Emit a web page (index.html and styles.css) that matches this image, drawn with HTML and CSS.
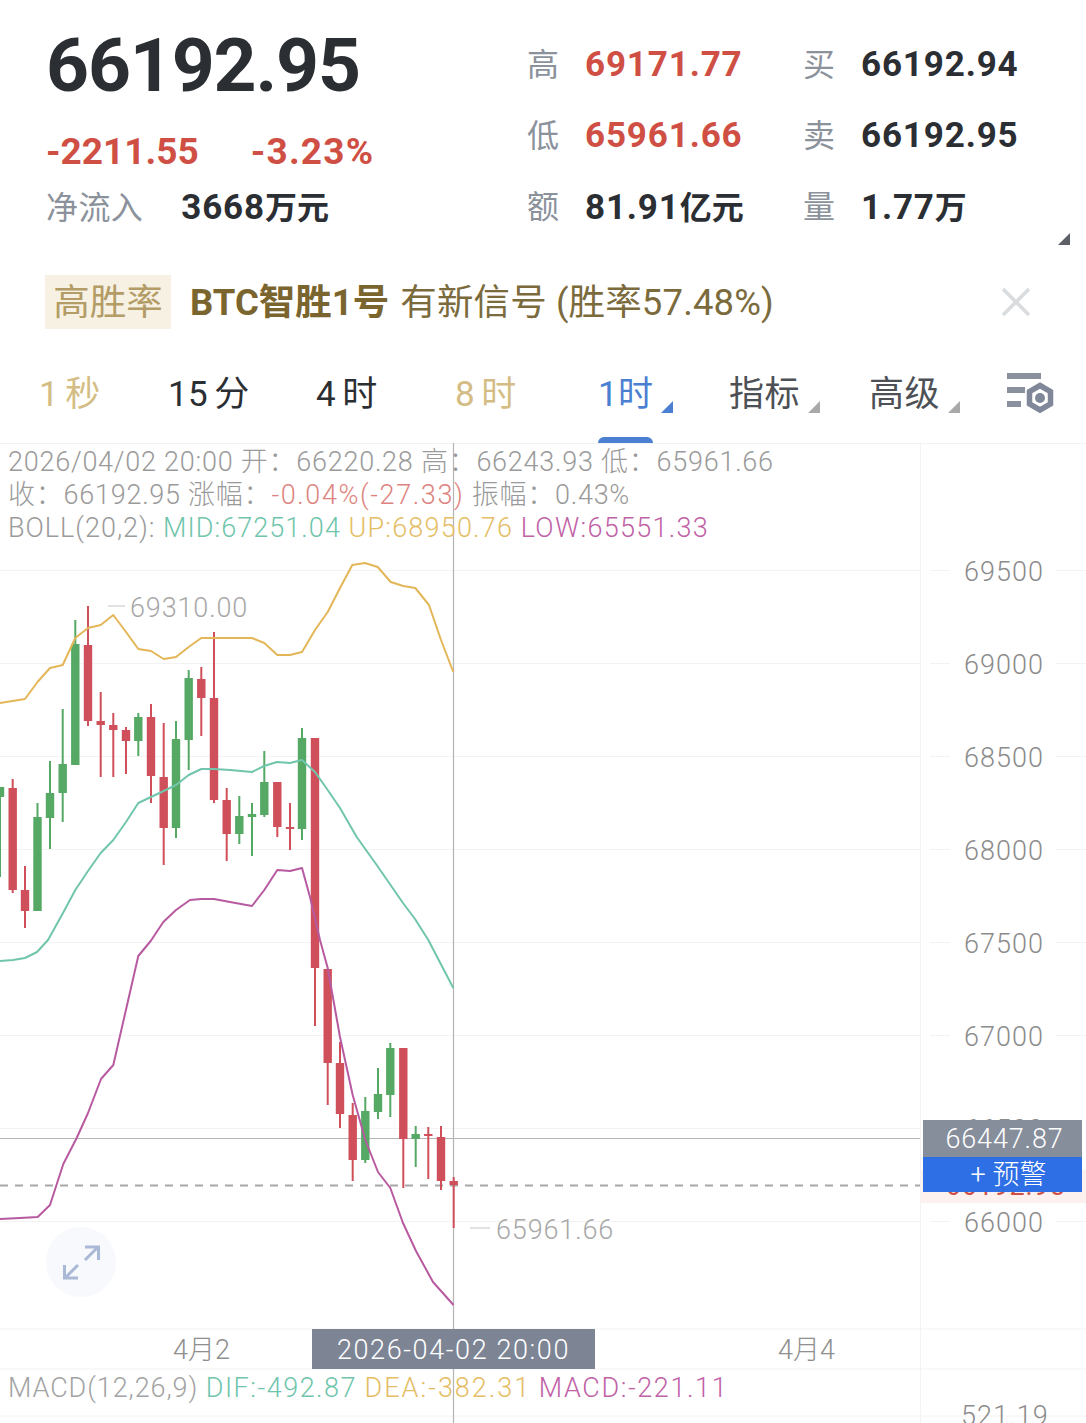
FILE: index.html
```html
<!DOCTYPE html>
<html lang="zh-CN">
<head>
<meta charset="utf-8">
<title>BTC</title>
<link rel="stylesheet" href="styles.css">
</head>
<body>
<main class="page">
  <section class="quote">
    <div class="quote-left">
      <div class="price">66192.95</div>
      <div class="change"><span class="neg">-2211.55</span><span class="neg pct">-3.23%</span></div>
      <div class="inflow"><span class="label">净流入</span><span class="val">3668<span class="unit">万元</span></span></div>
    </div>
    <div class="quote-grid">
      <span class="label">高</span><span class="val neg">69171.77</span><span class="label">买</span><span class="val">66192.94</span>
      <span class="label">低</span><span class="val neg">65961.66</span><span class="label">卖</span><span class="val">66192.95</span>
      <span class="label">额</span><span class="val val-unit">81.91<span class="unit">亿元</span></span><span class="label">量</span><span class="val val-unit">1.77<span class="unit">万</span></span>
    </div>
    <i class="corner corner-quote"></i>
  </section>

  <section class="signal">
    <span class="badge">高胜率</span>
    <strong class="sig-name">BTC智胜1号</strong>
    <span class="sig-text">有新信号 (胜率57.48%)</span>
    <svg class="close" viewBox="0 0 30 30" aria-hidden="true"><path d="M2 2 L28 28 M28 2 L2 28"/></svg>
  </section>

  <nav class="tabs">
    <span class="tab gold">1 秒</span>
    <span class="tab">15 分</span>
    <span class="tab">4 时</span>
    <span class="tab gold">8 时</span>
    <span class="tab active">1时<i class="corner corner-blue"></i></span>
    <span class="tab menu">指标<i class="corner corner-grey"></i></span>
    <span class="tab menu">高级<i class="corner corner-grey"></i></span>
    <svg class="gear" viewBox="0 0 50 46" aria-hidden="true">
      <path class="gear-bars" d="M1 0h34v6H1z M1 14h18v6H1z M1 28h14v6H1z"/>
      <path class="gear-hex" d="M34 12.5 L44.5 18.5 V31 L34 37 L23.500 31 V18.500 Z"/>
      <circle class="gear-dot" cx="34" cy="25" r="5"/>
    </svg>
  </nav>

  <section class="chart">
    <svg class="plot" viewBox="0 443 1086 980" aria-hidden="true">
      <path class="grid" d="M0 570.500H920 M0 663.500H920 M0 756.500H920 M0 849.500H920 M0 942.500H920 M0 1035.500H920 M0 1128.500H920 M0 1221.500H920 M0 1329H1086 M0 1369H1086 M0 1416H1086 M920.500 443V1423 M930 570.500H950 M1056 570.500H1086 M930 663.500H950 M1056 663.500H1086 M930 756.500H950 M1056 756.500H1086 M930 849.500H950 M1056 849.500H1086 M930 942.500H950 M1056 942.500H1086 M930 1035.500H950 M1056 1035.500H1086 M930 1221.500H950 M1056 1221.500H1086"/>

      <path class="cross" d="M453.500 443V1423 M0 1138.500H920"/>
      <path class="dash" d="M0 1185.500H920"/>
      <path class="leader" d="M108 606H125 M470 1228H490"/>

      <path class="wick up" d="M0 787V877 M37.500 803V911 M50 761V849 M62.700 709V822 M75.300 620V765 M138.300 713V756 M176 721V838 M188.700 670V770 M239.300 796V844 M252 803V856 M264.300 751V817 M302 728V840 M365.300 1097V1163 M378 1068V1119 M390.300 1043V1117 M415.700 1126V1167"/>
      <path class="body up" d="M0 787V797 M37.500 817V911 M50 793V818 M62.700 764V793 M75.300 644V765 M138.300 717V741 M176 739V828 M188.700 678V740 M239.300 816V834 M252 814V817 M264.300 782V815 M302 738V829 M365.300 1111V1160 M378 1094V1112 M390.300 1048V1095 M415.700 1134V1139"/>
      <path class="wick down" d="M12.700 779V893 M25 866V928 M88 606V726 M100.700 692V777 M113.300 713V777 M126 727V774 M151 704V803 M163.700 723V865 M201.300 667V736 M214 632V803 M226.700 788V861 M277.300 782V837 M290 803V850 M315 738V1026 M327.700 969V1105 M340 1042V1128 M352.700 1103V1181 M403.300 1048V1188 M428.300 1127V1179 M441 1126V1190 M453.700 1177V1228"/>
      <path class="body down" d="M12.700 788V890 M25 890V911 M88 645V721 M100.700 721V725 M113.300 725V730 M126 730V741 M151 717V776 M163.700 777V828 M201.300 679V698 M214 698V800 M226.700 800V834 M277.300 782V827 M290 827V829 M315 738V968 M327.700 969V1063 M340 1063V1114 M352.700 1115V1160 M403.300 1048V1139 M428.300 1134V1136 M441 1137V1181 M453.700 1181V1185"/>

      <path class="line boll-up" d="M0 703 25 699 37.500 682 50 668 62.700 665 75.300 638 88 628 100.700 625 113.300 615 126 632 138.300 649 151 651 163.700 659 176 657 188.700 647 201.300 638 214 638 252 638 264.300 643 277.300 655 290 655 302 652 315 630 327.700 612 340 588 352.300 565 365 563 377.700 567 390.700 582 403.300 586 415.300 588 429 605 441 640 453.300 672"/>
      <path class="line boll-mid" d="M0 961 13 960 25 958 37 952 48 940 63 913 75.300 890 88 871 100.700 853 113.300 840 126 822 138.300 803 151 797 163.700 791 176 785 188.700 775 201.300 769 214 769 230 770 252 772 264 766 277 762 290 763 302 760 315 772 327.700 790 340 808 356.700 837 376.700 865 403 903 415 919 428.300 940 453.300 988"/>
      <path class="line boll-low" d="M0 1219 20 1218 37.700 1217 50 1205 63.300 1164 76.700 1138 88 1113 101 1079 113.300 1065 138.300 956 150.700 941 163.300 922 176 910 190 900 201.300 899 214 899 230 902 252 906 264.300 890 277.300 870 290 871 302 868 310 897 320 940 327.700 968 340 1037 352.700 1095 365.300 1140 378 1172 390.300 1188 403 1223 416 1251 433 1282 453.500 1305"/>

      <circle class="expand-bg" cx="81" cy="1262" r="35"/>
      <path class="expand" d="M85 1260 98 1247 M85 1247H98.500V1260 M78 1265 65 1278 M64.500 1265V1278H78"/>
    </svg>

    <div class="legend">
      <div>2026/04/02 20:00 开：66220.28 高：66243.93 低：65961.66</div>
      <div>收：66192.95 涨幅：<span class="c-red">-0.04%(-27.33)</span> 振幅：0.43%</div>
      <div class="legend-boll">BOLL(20,2): <span class="c-teal">MID:67251.04</span> <span class="c-gold">UP:68950.76</span> <span class="c-pink">LOW:65551.33</span></div>
    </div>

    <span class="mark mark-high">69310.00</span>
    <span class="mark mark-low">65961.66</span>

    <div class="y-axis">
      <span>69500</span><span>69000</span><span>68500</span><span>68000</span><span>67500</span><span>67000</span><span>66500</span><span>66000</span>
    </div>

    <div class="last-price">66192.95</div>
    <div class="tags">
      <div class="tag-price">66447.87</div>
      <div class="tag-alert">+ 预警</div>
    </div>

    <div class="x-axis">
      <span class="x-a">4月2</span>
      <span class="x-cur">2026-04-02 20:00</span>
      <span class="x-b">4月4</span>
    </div>

    <div class="macd">MACD(12,26,9) <span class="m-dif">DIF:-492.87</span> <span class="m-dea">DEA:-382.31</span> <span class="m-val">MACD:-221.11</span></div>
    <span class="macd-top">521.19</span>
  </section>
</main>
</body>
</html>
```
FILE: styles.css
```css
* { box-sizing: border-box; }
html, body { margin: 0; background: #fff; }
body { font-family: Roboto, "Noto Sans CJK SC", sans-serif; }
.page { width: 1086px; height: 1423px; overflow: hidden; position: relative; }
i { display: block; }

/* quote */
.quote { position: relative; height: 262px; display: flex; padding-left: 46px; }
.quote-left { width: 481px; }
.price { height: 130px; line-height: 130px; font-size: 75px; font-weight: 700; color: #2b2e33; letter-spacing: -1.150px; }
.change { height: 44px; line-height: 44px; font-size: 37px; font-weight: 700; display: flex; gap: 52px; }
.pct { letter-spacing: 1.2px; }
.inflow { height: 66px; line-height: 68px; display: flex; gap: 38px; }
.inflow .label { letter-spacing: .4px; }
.label { color: #8b929b; font-size: 32px; font-weight: 400; }
.val { color: #2b2e33; font-size: 35px; font-weight: 700; letter-spacing: .85px; }
.neg, .val.neg { color: #cf4f44; }
.unit { font-size: 32px; letter-spacing: 0; }
.quote-grid { display: grid; grid-template-columns: 57px 219px 57px 1fr; grid-auto-rows: 71px; align-items: center; padding-top: 29px; margin-left: 1px; }
.quote-grid .label { margin-bottom: 6px; margin-left: -1px; }
.quote-grid .val-unit { margin-bottom: 4px; }
.corner { width: 0; height: 0; border-style: solid; border-width: 0 0 12px 12px; border-color: transparent; }
.corner-quote { position: absolute; left: 1058px; top: 233px; border-bottom-color: #5d6167; }

/* signal */
.signal { height: 82px; display: flex; align-items: center; padding-left: 45px; }
.badge { width: 126px; height: 54px; line-height: 56px; text-align: center; background: #f7f1e4; color: #b39c66; font-size: 36.5px; margin-top: -3px; }
.sig-name { margin-left: 19px; color: #7b652f; font-size: 36.5px; font-weight: 700; margin-top: -7px; }
.sig-text { margin-left: 11px; color: #7b6b3c; font-size: 36.5px; margin-top: -7px; letter-spacing: .13px; }
.close { width: 30px; height: 30px; margin-left: 227px; margin-top: -3px; }
.close path { stroke: #d9dcdf; stroke-width: 3.500; fill: none; }

/* tabs */
.tabs { height: 99px; display: grid; grid-template-columns: 129px 148px 139px 143px 131px 140px 137px 50px; padding-left: 39px; align-items: start; padding-top: 28px; }
.tab { position: relative; font-size: 35px; line-height: 46px; color: #2b2e33; width: max-content; word-spacing: -3px; letter-spacing: .4px; }
.tab.gold { color: #d4bd84; }
.tab.menu { color: #4d5156; }
.tab.active { color: #4a7fd2; }
.tab.active::after { content: ""; position: absolute; left: 0; right: 0; bottom: -25px; height: 6px; background: #4a7fd2; border-radius: 6px 6px 0 0; }
.tab .corner { position: absolute; left: calc(100% + 8px); bottom: 5px; }
.corner-blue { border-bottom-color: #4a7fd2; }
.corner-grey { border-bottom-color: #a9a9a9; }
.gear { width: 50px; height: 46px; margin-top: 1px; }
.gear-bars { fill: #8a909e; }
.gear-hex { fill: none; stroke: #7f8798; stroke-width: 5.500; }
.gear-dot { fill: #7f8798; }

/* chart */
.chart { position: relative; height: 980px; border-top: 1px solid #f3f3f3; }
.plot { position: absolute; left: 0; top: -1px; width: 1086px; height: 980px; }
.grid { stroke: #f3f3f3; stroke-width: 1; fill: none; }
.wick { stroke-width: 2; fill: none; }
.body { stroke-width: 8.400; fill: none; }
.up { stroke: #56a964; }
.down { stroke: #cf505a; }
.line { fill: none; stroke-width: 2; stroke-linejoin: round; }
.boll-up { stroke: #e3b658; }
.boll-mid { stroke: #70c5ac; }
.boll-low { stroke: #b75aa0; }
.cross { stroke: #b4b4b4; stroke-width: 1.200; fill: none; }
.dash { stroke: #a8a8a8; stroke-width: 1.800; stroke-dasharray: 8 7; fill: none; }
.leader { stroke: #c4c4c4; stroke-width: 1; fill: none; }
.expand-bg { fill: #f8f9fd; }
.expand { stroke: #a9b9d6; stroke-width: 3; fill: none; }

.legend { position: relative; padding: 2px 0 0 8px; font-size: 27px; line-height: 33px; color: #9a9a9a; white-space: nowrap; font-weight: 300; letter-spacing: .75px; }
.legend-boll { letter-spacing: 1px; }
.c-red { color: #dd8480; letter-spacing: 1.6px; }
.c-teal { color: #70c5ac; letter-spacing: 1.05px; }
.c-gold { color: #e5bd65; letter-spacing: 1.2px; }
.c-pink { color: #bf62a6; letter-spacing: 1.3px; }

.mark { position: absolute; font-size: 27px; line-height: 32px; color: #a8a8a8; font-weight: 300; letter-spacing: .85px; }
.mark-high { left: 130px; top: 148px; }
.mark-low { left: 496px; top: 770px; }

.y-axis { position: absolute; left: 921px; right: 0; top: 81px; display: grid; grid-auto-rows: 93px; align-items: center; justify-items: center; font-size: 27px; color: #8b8b8b; font-weight: 300; letter-spacing: 1px; padding-left: 1px; }
.last-price { position: absolute; left: 921px; right: 0; top: 726px; height: 33px; background: #fdf1f0; color: #cf4f44; font-size: 27px; line-height: 33px; text-align: center; letter-spacing: .85px; padding-left: 4px; }
.tags { position: absolute; left: 923px; width: 159px; top: 676px; }
.tag-price { height: 37px; line-height: 39px; background: #868d9b; color: #fff; font-size: 27px; text-align: center; font-weight: 300; letter-spacing: .85px; padding-left: 4px; }
.tag-alert { height: 35px; line-height: 37px; background: #2f6fe6; color: #fff; font-size: 27px; text-align: center; font-weight: 300; padding-left: 12px; }

.x-axis { position: absolute; left: 0; right: 0; top: 885px; height: 40px; font-size: 27px; line-height: 42px; color: #8f8f8f; font-weight: 300; }
.x-axis span { position: absolute; top: 0; height: 40px; }
.x-a { left: 173px; }
.x-b { left: 778px; }
.x-cur { left: 312px; width: 283px; text-align: center; background: #7d8595; color: #fff; letter-spacing: 1.6px; }

.macd { position: absolute; left: 8px; top: 928px; font-size: 27px; line-height: 33px; color: #a3a3a3; font-weight: 300; white-space: nowrap; letter-spacing: .92px; }
.m-dif { color: #70c5ac; letter-spacing: 1.5px; }
.m-dea { color: #e5bd65; letter-spacing: 2px; }
.m-val { color: #bf62a6; letter-spacing: 1.6px; }
.macd-top { position: absolute; left: 961px; top: 956px; font-size: 27px; line-height: 32px; color: #8b8b8b; font-weight: 300; letter-spacing: 1.1px; }
```
